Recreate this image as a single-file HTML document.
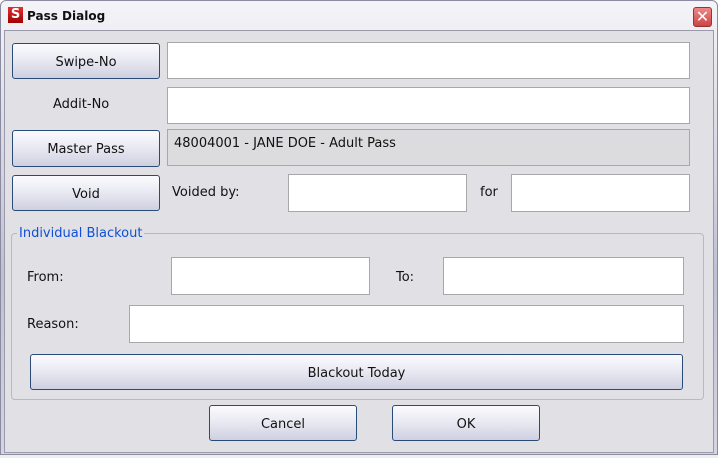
<!DOCTYPE html>
<html><head><style>
*{box-sizing:border-box;margin:0;padding:0}
body{width:718px;height:458px;overflow:hidden;background:#fff;font-family:"DejaVu Sans","Liberation Sans",sans-serif;font-size:13px;color:#111;position:relative}
.a{position:absolute}
.win{left:0;top:0;width:718px;height:455px;background:linear-gradient(#f4f4f8,#c0c0d4 60%,#d4d4e2);border:1px solid #8a8aa0;border-radius:6px 6px 0 0}
.body{left:4px;top:30px;width:710px;height:423px;background:#e1e0e5;border:1px solid #9a9aaa}
.btn{background:linear-gradient(#fbfbfe,#e8e8f2 50%,#cfd0e0);border:1px solid #2a4a78;border-radius:3px;text-align:center;display:flex;align-items:center;justify-content:center;padding-top:2px}
.in{background:#fff;border:1px solid #a8a8a8}
.lb{white-space:nowrap}
</style></head><body>
<div class="a win"></div>
<div class="a" style="left:8px;top:7px;width:15px;height:16px;background:linear-gradient(#e03030,#a00000);color:#fff;font-weight:bold;font-size:13px;text-align:center;line-height:16px">S</div>
<div class="a lb" style="left:27px;top:9px;font-weight:bold;font-size:12px">Pass Dialog</div>
<div class="a" style="left:693px;top:7px;width:19px;height:20px;background:linear-gradient(#e88,#c44);border:1px solid #933;border-radius:3px;color:#fff;font-size:16px;line-height:18px;text-align:center">✕</div>
<div class="a body"></div>
<div class="a" style="left:0;top:455px;width:718px;height:3px;background:#eee"></div>

<div class="a btn" style="left:12px;top:43px;width:148px;height:36px">Swipe-No</div>
<div class="a in" style="left:167px;top:42px;width:523px;height:37px"></div>
<div class="a lb" style="left:53px;top:97px">Addit-No</div>
<div class="a in" style="left:167px;top:87px;width:523px;height:37px"></div>
<div class="a btn" style="left:12px;top:130px;width:148px;height:37px">Master Pass</div>
<div class="a" style="left:167px;top:129px;width:523px;height:37px;background:#dcdcdf;border:1px solid #a8a8a8;padding:6px 6px">48004001 - JANE DOE - Adult Pass</div>
<div class="a btn" style="left:12px;top:175px;width:148px;height:36px">Void</div>
<div class="a lb" style="left:172px;top:185px">Voided by:</div>
<div class="a in" style="left:288px;top:174px;width:179px;height:38px"></div>
<div class="a lb" style="left:480px;top:185px">for</div>
<div class="a in" style="left:511px;top:174px;width:179px;height:38px"></div>

<div class="a" style="left:11px;top:233px;width:693px;height:167px;border:1px solid #b8b8c0;border-radius:4px"></div>
<div class="a lb" style="left:17px;top:226px;padding:0 2px;background:#e1e0e5;color:#1050d8">Individual Blackout</div>
<div class="a lb" style="left:27px;top:270px">From:</div>
<div class="a in" style="left:171px;top:257px;width:199px;height:38px"></div>
<div class="a lb" style="left:396px;top:270px">To:</div>
<div class="a in" style="left:443px;top:257px;width:241px;height:38px"></div>
<div class="a lb" style="left:27px;top:317px">Reason:</div>
<div class="a in" style="left:129px;top:305px;width:555px;height:38px"></div>
<div class="a btn" style="left:30px;top:354px;width:653px;height:36px">Blackout Today</div>

<div class="a btn" style="left:209px;top:405px;width:148px;height:36px">Cancel</div>
<div class="a btn" style="left:392px;top:405px;width:148px;height:36px">OK</div>
</body></html>
